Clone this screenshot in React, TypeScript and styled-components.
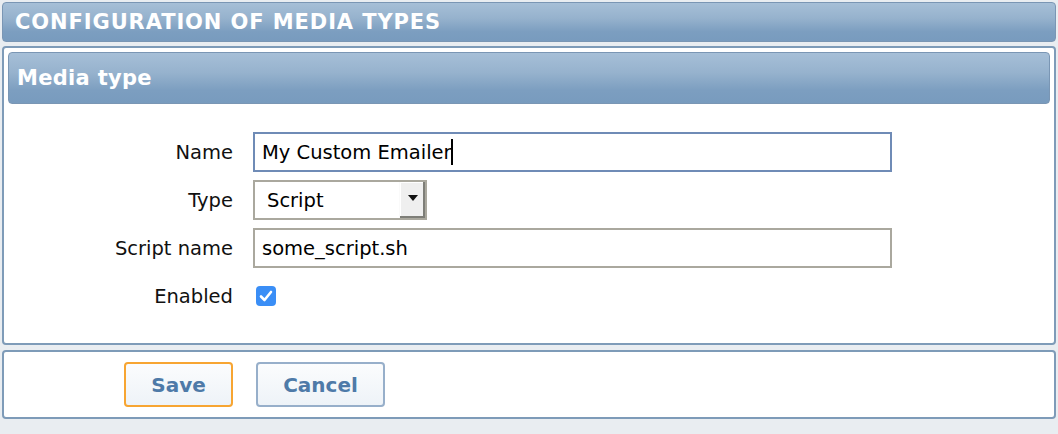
import { FC, Fragment } from 'react';
import styled, { createGlobalStyle } from 'styled-components';

const GlobalStyle = createGlobalStyle`
	html, body {
		margin: 0;
		padding: 0;
		background: #e9edf1;
	}
	body {
		font-family: 'DejaVu Sans', Verdana, sans-serif;
	}
`;

const Page = styled.div`
	width: 1058px;
	height: 434px;
	padding: 2px 2px 0 2px;
	box-sizing: border-box;
	display: flex;
	flex-direction: column;
	gap: 4px;
`;

const barGradient = `linear-gradient(to bottom, #a6bfd7 0%, #96b2cd 40%, #7c9ec0 75%, #789bbe 100%)`;

const TitleBar = styled.div`
	height: 40px;
	box-sizing: border-box;
	border: 1px solid #7a96b4;
	border-radius: 4px;
	background: ${barGradient};
	display: flex;
	align-items: center;
	padding-left: 12px;
	color: #fff;
	font-weight: bold;
	font-size: 21px;
	letter-spacing: 0.9px;
`;

const Panel = styled.div`
	background: #fff;
	border: 2px solid #7e9bb8;
	border-radius: 4px;
	box-sizing: border-box;
`;

const MainPanel = styled(Panel)`
	height: 299px;
	padding: 4px;
`;

const SectionBar = styled.div`
	height: 52px;
	box-sizing: border-box;
	border: 1px solid #7a96b4;
	border-radius: 4px;
	background: ${barGradient};
	display: flex;
	align-items: center;
	padding-left: 8px;
	color: #fff;
	font-weight: bold;
	font-size: 21px;
	letter-spacing: 0.3px;
`;

const Form = styled.div`
	display: grid;
	grid-template-columns: 225px 1fr;
	column-gap: 20px;
	row-gap: 8px;
	padding-top: 28px;
	align-items: center;
`;

const Label = styled.label`
	text-align: right;
	font-size: 19.5px;
	color: #111;
`;

const TextInput = styled.div<{ $focused?: boolean }>`
	width: 639px;
	height: 40px;
	box-sizing: border-box;
	border: 2px solid ${p => (p.$focused ? '#6f8bb6' : '#aaa89e')};
	display: flex;
	align-items: center;
	padding-left: 7px;
	font-size: 19.5px;
	color: #000;
`;

const Caret = styled.span`
	display: inline-block;
	width: 2px;
	height: 26px;
	background: #000;
	margin-left: -1px;
`;

const Select = styled.div`
	width: 174px;
	height: 40px;
	box-sizing: border-box;
	border: 2px solid #aaa89e;
	display: flex;
	align-items: stretch;
	font-size: 19.5px;
`;

const SelectValue = styled.div`
	flex: 1;
	display: flex;
	align-items: center;
	padding-left: 12px;
`;

const SelectArrow = styled.div`
	width: 26px;
	background: #efefef;
	border-left: 1px solid #fafafa;
	box-shadow: inset -2px -2px 0 #7e7e78, inset 1px 1px 0 #fff;
	display: flex;
	align-items: center;
	justify-content: center;
	padding-bottom: 4px;
	box-sizing: border-box;

	&::after {
		content: '';
		border-left: 5px solid transparent;
		border-right: 5px solid transparent;
		border-top: 6px solid #111;
	}
`;

const CheckRow = styled.div`
	height: 40px;
	display: flex;
	align-items: center;
	padding-left: 3px;
`;

const CheckBox = styled.span`
	width: 20px;
	height: 20px;
	border-radius: 4px;
	background: #3a8ef6;
	display: flex;
	align-items: center;
	justify-content: center;
`;

const Footer = styled(Panel)`
	margin-top: 1px;
	height: 69px;
	display: flex;
	align-items: center;
	gap: 23px;
	padding-left: 120px;
`;

const Button = styled.button<{ $primary?: boolean }>`
	height: 45px;
	padding: 0;
	box-sizing: border-box;
	border: 2px solid ${p => (p.$primary ? '#f7a532' : '#97afca')};
	border-radius: 4px;
	background: linear-gradient(to bottom, #fbfcfd, #eef3f8);
	font-family: 'DejaVu Sans', Verdana, sans-serif;
	font-weight: bold;
	font-size: 20px;
	color: #4e7aa8;
	width: ${p => (p.$primary ? '109px' : '129px')};
`;

const fields = [{ label: 'Name', value: 'My Custom Emailer', focused: true }];

const App: FC = () => {
	return (
		<>
			<GlobalStyle />
			<Page>
				<TitleBar>CONFIGURATION OF MEDIA TYPES</TitleBar>
				<MainPanel>
					<SectionBar>Media type</SectionBar>
					<Form>
						{fields.map(f => (
							<Fragment key={f.label}>
								<Label>{f.label}</Label>
								<TextInput $focused={f.focused}>
									{f.value}
									<Caret />
								</TextInput>
							</Fragment>
						))}
						<Label>Type</Label>
						<Select>
							<SelectValue>Script</SelectValue>
							<SelectArrow />
						</Select>
						<Label>Script name</Label>
						<TextInput>some_script.sh</TextInput>
						<Label>Enabled</Label>
						<CheckRow>
							<CheckBox>
								<svg width='14' height='12' viewBox='0 0 14 12'>
									<path
										d='M2 6.5 L5.5 10 L12 2'
										fill='none'
										stroke='#fff'
										strokeWidth='2.6'
										strokeLinecap='round'
										strokeLinejoin='round'
									/>
								</svg>
							</CheckBox>
						</CheckRow>
					</Form>
				</MainPanel>
				<Footer>
					<Button $primary>Save</Button>
					<Button>Cancel</Button>
				</Footer>
			</Page>
		</>
	);
};

export default App;
